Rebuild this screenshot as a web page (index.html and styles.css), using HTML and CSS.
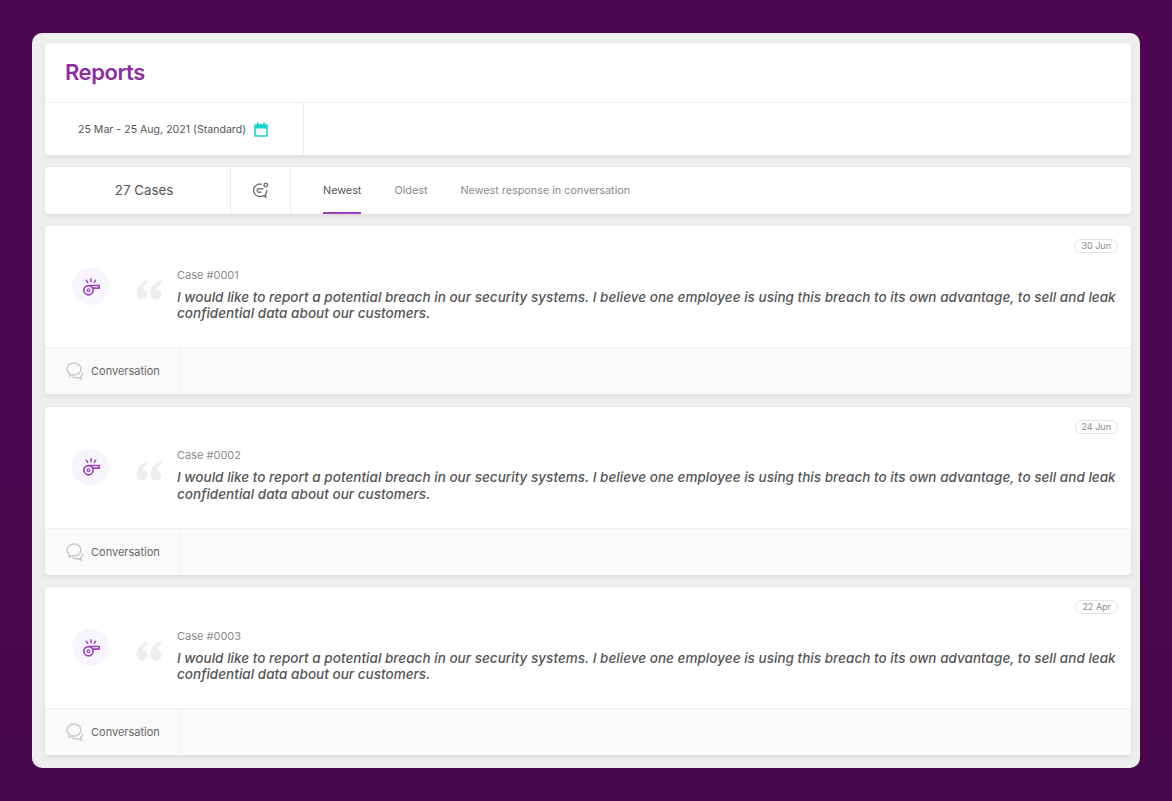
FILE: index.html
```html
<!DOCTYPE html>
<html lang="en">
<head>
  <meta charset="UTF-8">
  <meta name="viewport" content="width=device-width, initial-scale=1.0">
  <title>Reports</title>
  <link rel="stylesheet" href="styles.css">
</head>
<body>
  <!-- Shared icons -->
  <svg class="icon-sprite" width="0" height="0">
    <symbol id="icon-whistle" viewBox="0 0 18 18">
      <circle cx="6.5" cy="12.2" r="4.6" fill="none" stroke="currentColor" stroke-width="1.7"/>
      <circle cx="6.5" cy="12.2" r="1.4" fill="none" stroke="currentColor" stroke-width="1.2"/>
      <path d="M6.5 7.5H17.5L17 10.2H10.5" fill="none" stroke="currentColor" stroke-width="1.7"/>
      <path d="M9 .8v3M4.3 2.2l1.4 2.2M13.7 2.2l-1.400 2.200" fill="none" stroke="currentColor" stroke-width="1.5" stroke-linecap="round"/>
    </symbol>
    <symbol id="icon-quote" viewBox="0 0 26 21">
      <path d="M11.5 1C5.500 2.800 .5 7.500 .5 14c0 4 2.300 6.500 5.500 6.500 3 0 5.500-2.300 5.500-5.300 0-2.800-2-4.900-4.700-5.200.5-2.800 2.400-4.700 4.700-6z"/>
      <path d="M25.500 1C19.500 2.800 14.500 7.500 14.500 14c0 4 2.300 6.500 5.500 6.500 3 0 5.500-2.300 5.500-5.300 0-2.800-2-4.900-4.700-5.200.5-2.800 2.400-4.700 4.700-6z"/>
    </symbol>
    <symbol id="icon-conversation" viewBox="0 0 18 18">
      <path d="M8 1C4.200 1 1 3.700 1 7c0 1.900 1 3.500 2.600 4.600L3.300 14l3-1.200c.6.100 1.100.200 1.700.200 3.800 0 7-2.700 7-6S11.800 1 8 1z" fill="none" stroke="currentColor" stroke-width="1.5"/>
      <path d="M6.500 14.800c1 .6 2.200.9 3.500.9.600 0 1.100-.1 1.700-.2l3.600 1.500-.5-2.700c1.300-.9 2-2 2.200-3.300" fill="none" stroke="currentColor" stroke-width="1.5"/>
    </symbol>
  </svg>

  <main class="panel">
    <!-- Title and date filter -->
    <section class="card head-card">
      <h1 class="page-title">Reports</h1>
      <div class="filter-row">
        <div class="date-filter">
          <span>25 Mar - 25 Aug, 2021 (Standard)</span>
          <svg class="calendar-icon" viewBox="0 0 14 15" width="14" height="15">
            <path d="M1 3h12v11H1z" fill="none" stroke="#19d3c5" stroke-width="1.6" stroke-linejoin="round"/>
            <path d="M1 3h12v3.500H1z" fill="#19d3c5"/>
            <path d="M3.800 .5v3M10.200 .5v3" stroke="#19d3c5" stroke-width="1.8"/>
          </svg>
        </div>
      </div>
    </section>

    <!-- Sorting -->
    <section class="card sort-card">
      <div class="case-count">27 Cases</div>
      <div class="sort-icon">
        <svg viewBox="0 0 18 18" width="17" height="17" fill="none" stroke="#777" stroke-width="1.5">
          <path d="M10.500 2.600A6.600 6.600 0 1 0 8.800 15.400c1.600 0 2.800-.3 3.800-1l2 1.600-.3-3a6.500 6.500 0 0 0 1.300-4.300"/>
          <path d="M12 7.200H7.200a1.800 1.800 0 0 0 0 3.600H10"/>
          <circle cx="14.6" cy="3.2" r="1.9"/>
        </svg>
      </div>
      <nav class="sort-tabs">
        <a class="sort-tab active">Newest</a>
        <a class="sort-tab">Oldest</a>
        <a class="sort-tab">Newest response in conversation</a>
      </nav>
    </section>

    <!-- Case list -->
    <section class="card case-card">
      <div class="case-body">
        <span class="case-date">30 Jun</span>
        <div class="case-avatar"><svg class="whistle"><use href="#icon-whistle"/></svg></div>
        <svg class="quote-mark"><use href="#icon-quote"/></svg>
        <div class="case-text">
          <div class="case-number">Case #0001</div>
          <p class="case-quote">I would like to report a potential breach in our security systems. I believe one employee is using this breach to its own advantage, to sell and leak confidential data about our customers.</p>
        </div>
      </div>
      <div class="case-foot">
        <div class="conversation">
          <svg class="conversation-icon"><use href="#icon-conversation"/></svg>
          <span>Conversation</span>
        </div>
      </div>
    </section>

    <section class="card case-card">
      <div class="case-body">
        <span class="case-date">24 Jun</span>
        <div class="case-avatar"><svg class="whistle"><use href="#icon-whistle"/></svg></div>
        <svg class="quote-mark"><use href="#icon-quote"/></svg>
        <div class="case-text">
          <div class="case-number">Case #0002</div>
          <p class="case-quote">I would like to report a potential breach in our security systems. I believe one employee is using this breach to its own advantage, to sell and leak confidential data about our customers.</p>
        </div>
      </div>
      <div class="case-foot">
        <div class="conversation">
          <svg class="conversation-icon"><use href="#icon-conversation"/></svg>
          <span>Conversation</span>
        </div>
      </div>
    </section>

    <section class="card case-card">
      <div class="case-body">
        <span class="case-date">22 Apr</span>
        <div class="case-avatar"><svg class="whistle"><use href="#icon-whistle"/></svg></div>
        <svg class="quote-mark"><use href="#icon-quote"/></svg>
        <div class="case-text">
          <div class="case-number">Case #0003</div>
          <p class="case-quote">I would like to report a potential breach in our security systems. I believe one employee is using this breach to its own advantage, to sell and leak confidential data about our customers.</p>
        </div>
      </div>
      <div class="case-foot">
        <div class="conversation">
          <svg class="conversation-icon"><use href="#icon-conversation"/></svg>
          <span>Conversation</span>
        </div>
      </div>
    </section>
  </main>
</body>
</html>
```

FILE: styles.css
```css
body {
  font-family: Inter, "Noto Sans", sans-serif;
  margin: 0;
  padding: 33px 32px;
  box-sizing: border-box;
  height: 801px;
  overflow: hidden;
  background: linear-gradient(180deg, #4f0650 0%, #4f0650 60%, #46054a 100%);
}

.icon-sprite {
  display: none;
}

.panel {
  width: 1108px;
  height: 735px;
  box-sizing: border-box;
  padding: 10px 9px 0 13px;
  background-color: #eeeeee;
  border-radius: 10px;
  display: flex;
  flex-direction: column;
}

.card {
  background: white;
  border-radius: 4px;
  box-shadow: 0 2px 5px rgba(0, 0, 0, 0.08);
  overflow: hidden;
  flex-shrink: 0;
}

.head-card {
  height: 112px;
  margin-bottom: 12px;
}

.page-title {
  margin: 0;
  height: 59px;
  padding-left: 20px;
  line-height: 59px;
  font-size: 22px;
  font-weight: 600;
  letter-spacing: -0.45px;
  color: #8e2da3;
  border-bottom: 1px solid #f1f1f1;
}

.filter-row {
  display: flex;
  height: 52px;
}

.date-filter {
  width: 258px;
  box-sizing: content-box;
  border-right: 1px solid #ececec;
  display: flex;
  align-items: center;
  justify-content: center;
  gap: 8px;
  padding-right: 0;
  font-size: 10.6px;
  color: #555;
}

.calendar-icon {
  margin-right: 2px;
}

.sort-card {
  height: 47px;
  margin-bottom: 12px;
  display: flex;
}

.case-count {
  width: 172px;
  padding-left: 13px;
  border-right: 1px solid #ececec;
  text-align: center;
  line-height: 47px;
  font-size: 13.3px;
  color: #555;
}

.sort-icon {
  width: 59px;
  border-right: 1px solid #ececec;
  display: flex;
  align-items: center;
  justify-content: center;
}

.sort-tabs {
  display: flex;
  padding-left: 32px;
  gap: 33px;
}

.sort-tab {
  line-height: 47px;
  font-size: 10.8px;
  color: #8a8a8a;
}

.sort-tab.active {
  color: #555;
  border-bottom: 2px solid #9c3fb8;
  height: 45px;
}

.case-card {
  height: 168px;
  margin-bottom: 12.7px;
  display: flex;
  flex-direction: column;
}

.case-body {
  position: relative;
  height: 121px;
  border-bottom: 1px solid #efefef;
  display: flex;
  align-items: center;
  padding-left: 27px;
}

.case-date {
  position: absolute;
  top: 13px;
  right: 13px;
  padding: 0 6px;
  line-height: 12px;
  font-size: 9px;
  color: #8a8a8a;
  border: 1px solid #e3e3e3;
  border-radius: 8px;
}

.case-avatar {
  width: 37px;
  height: 37px;
  border-radius: 50%;
  background-color: #f8f4fd;
  display: flex;
  align-items: center;
  justify-content: center;
}

.whistle {
  width: 18px;
  height: 18px;
  color: #9a45b8;
}

.quote-mark {
  width: 26px;
  height: 21px;
  margin-left: 27px;
  margin-top: 6px;
  fill: #eeeeee;
}

.case-text {
  align-self: flex-start;
  margin-left: 15px;
  padding-top: 42.5px;
  padding-right: 15px;
  flex: 1;
}

.case-number {
  font-size: 11px;
  line-height: 13px;
  color: #8a8a8a;
  margin-bottom: 7px;
}

.case-quote {
  margin: 0;
  font-size: 13.5px;
  font-weight: 500;
  font-style: italic;
  line-height: 16.5px;
  letter-spacing: 0.03px;
  color: #555;
}

.case-foot {
  height: 46px;
  background-color: #fafafa;
  display: flex;
}

.conversation {
  width: 136px;
  border-right: 1px solid #efefef;
  display: flex;
  align-items: center;
  gap: 7px;
  padding-left: 21px;
  box-sizing: border-box;
  font-size: 11px;
  color: #666;
}

.conversation-icon {
  width: 18px;
  height: 18px;
  color: #c9c9c9;
}
```
